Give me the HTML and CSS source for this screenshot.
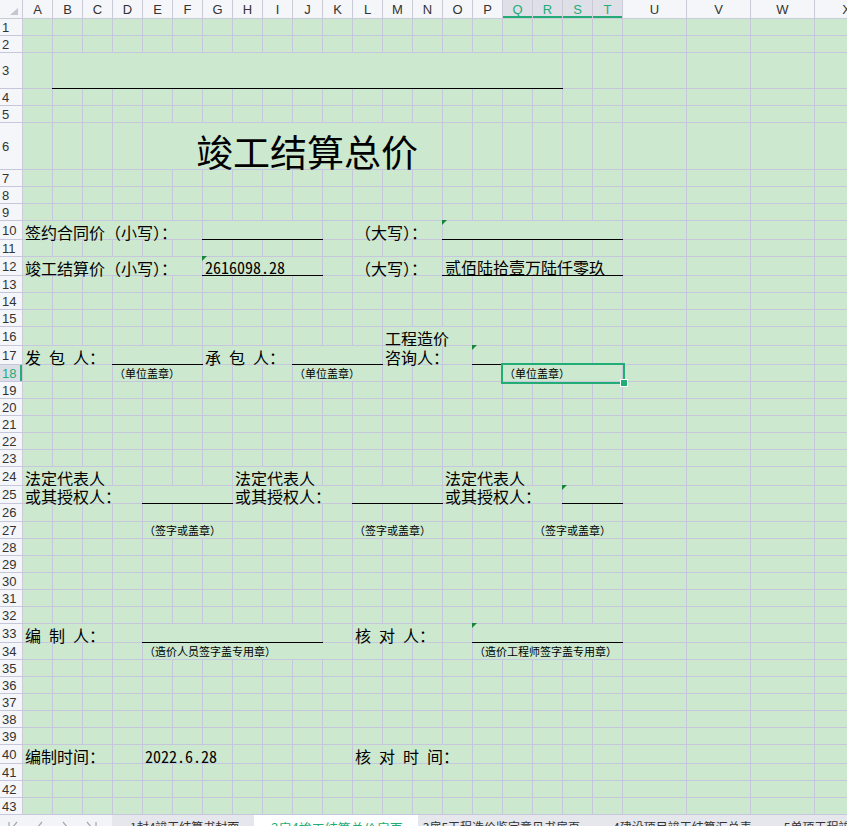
FILE: index.html
```html
<!DOCTYPE html>
<html lang="zh-CN">
<head>
<meta charset="utf-8">
<title>竣工结算总价</title>
<link rel="stylesheet" href="styles.css">
</head>
<body>
<div class="sheet">
  <div class="colhdr">
    <div class="corner"></div>
    <div class="ch">A</div><div class="ch">B</div><div class="ch">C</div><div class="ch">D</div><div class="ch">E</div>
    <div class="ch">F</div><div class="ch">G</div><div class="ch">H</div><div class="ch">I</div><div class="ch">J</div>
    <div class="ch">K</div><div class="ch">L</div><div class="ch">M</div><div class="ch">N</div><div class="ch">O</div>
    <div class="ch">P</div><div class="ch sel">Q</div><div class="ch sel">R</div><div class="ch sel">S</div><div class="ch sel">T</div>
    <div class="ch">U</div><div class="ch">V</div><div class="ch">W</div><div class="ch">X</div>
  </div>

  <div class="row"><div class="rh">1</div></div>
  <div class="row"><div class="rh">2</div></div>
  <div class="row h36"><div class="rh">3</div><div class="c u b-r"></div></div>
  <div class="row"><div class="rh">4</div></div>
  <div class="row"><div class="rh">5</div></div>
  <div class="row h47"><div class="rh">6</div><div class="c cv title e-n">竣工结算总价</div></div>
  <div class="row"><div class="rh">7</div></div>
  <div class="row"><div class="rh">8</div></div>
  <div class="row"><div class="rh">9</div></div>
  <div class="row h19"><div class="rh">10</div>
    <div class="c cv a-f">签约合同价（小写）：</div>
    <div class="c u g-j"></div>
    <div class="c cv l-n">（大写）：</div>
    <div class="c u tri o-t"></div>
  </div>
  <div class="row"><div class="rh">11</div></div>
  <div class="row h19"><div class="rh">12</div>
    <div class="c cv a-f">竣工结算价（小写）：</div>
    <div class="c u tri num g-j">2616098.28</div>
    <div class="c cv l-n">（大写）：</div>
    <div class="c u o-t">贰佰陆拾壹万陆仟零玖</div>
  </div>
  <div class="row"><div class="rh">13</div></div>
  <div class="row"><div class="rh">14</div></div>
  <div class="row"><div class="rh">15</div></div>
  <div class="row h19"><div class="rh">16</div><div class="c cv m-o">工程造价</div></div>
  <div class="row h19"><div class="rh">17</div>
    <div class="c cv sp a-c">发 包 人：</div>
    <div class="c u d-f"></div>
    <div class="c cv sp g-i">承 包 人：</div>
    <div class="c u j-l"></div>
    <div class="c cv m-n">咨询人：</div>
    <div class="c u tri p"></div>
  </div>
  <div class="row"><div class="rh sel">18</div>
    <div class="c s cv d-f">（单位盖章）</div>
    <div class="c s cv j-l">（单位盖章）</div>
    <div class="c s cv q-t active">（单位盖章）</div>
  </div>
  <div class="row"><div class="rh">19</div></div>
  <div class="row"><div class="rh">20</div></div>
  <div class="row"><div class="rh">21</div></div>
  <div class="row"><div class="rh">22</div></div>
  <div class="row"><div class="rh">23</div></div>
  <div class="row h19"><div class="rh">24</div>
    <div class="c cv a-c">法定代表人</div>
    <div class="c cv h-j">法定代表人</div>
    <div class="c cv o-q">法定代表人</div>
  </div>
  <div class="row h18"><div class="rh">25</div>
    <div class="c cv a-d">或其授权人：</div>
    <div class="c u e-g"></div>
    <div class="c cv h-k">或其授权人：</div>
    <div class="c u l-n"></div>
    <div class="c cv o-r">或其授权人：</div>
    <div class="c u tri s-t"></div>
  </div>
  <div class="row h18"><div class="rh">26</div></div>
  <div class="row"><div class="rh">27</div>
    <div class="c s cv e-g">（签字或盖章）</div>
    <div class="c s cv l-n">（签字或盖章）</div>
    <div class="c s cv r-t">（签字或盖章）</div>
  </div>
  <div class="row"><div class="rh">28</div></div>
  <div class="row"><div class="rh">29</div></div>
  <div class="row"><div class="rh">30</div></div>
  <div class="row"><div class="rh">31</div></div>
  <div class="row"><div class="rh">32</div></div>
  <div class="row h19"><div class="rh">33</div>
    <div class="c cv sp a-c">编 制 人：</div>
    <div class="c u e-j"></div>
    <div class="c cv sp l-n">核 对 人：</div>
    <div class="c u tri p-t"></div>
  </div>
  <div class="row"><div class="rh">34</div>
    <div class="c s cv e-k">（造价人员签字盖专用章）</div>
    <div class="c s cv p-t">（造价工程师签字盖专用章）</div>
  </div>
  <div class="row"><div class="rh">35</div></div>
  <div class="row"><div class="rh">36</div></div>
  <div class="row"><div class="rh">37</div></div>
  <div class="row"><div class="rh">38</div></div>
  <div class="row"><div class="rh">39</div></div>
  <div class="row h19"><div class="rh">40</div>
    <div class="c cv a-c">编制时间：</div>
    <div class="c cv num e-g">2022.6.28</div>
    <div class="c cv sp l-o">核 对 时 间：</div>
  </div>
  <div class="row"><div class="rh">41</div></div>
  <div class="row"><div class="rh">42</div></div>
  <div class="row"><div class="rh">43</div></div>

  <div class="tabs">
    <div class="nav">
      <svg class="navicons" width="112" height="14" viewBox="0 0 112 14">
        <g fill="none" stroke="#a4a7b3" stroke-width="1.2">
          <path d="M9 1V13"/>
          <path d="M17 1L12 7L17 13"/>
          <path d="M42 1L37 7L42 13"/>
          <path d="M63 1L68 7L63 13"/>
          <path d="M87 1L92 7L87 13"/>
          <path d="M96 1V13"/>
        </g>
      </svg>
    </div>
    <div class="tab t1">1封4竣工结算书封面</div>
    <div class="tab on">2扉4竣工结算总价扉页</div>
    <div class="tab t3">3扉5工程造价鉴定意见书扉页</div>
    <div class="tab">4建设项目竣工结算汇总表</div>
    <div class="tab">5单项工程竣工结算汇总表</div>
  </div>
</div>
</body>
</html>
```

FILE: styles.css
```css
:root {
  --bg: #cce8cf;
  --grid: #c6c6dd;
  --hdr: #f5f6f9;
  --hdrline: #cacbd7;
  --green: #22ad76;
  --cols: 23px repeat(20, 30px) repeat(4, 64px);
}

* { box-sizing: border-box; }

body {
  margin: 0;
  width: 847px;
  height: 826px;
  overflow: hidden;
  background: var(--bg);
  font-family: "Noto Sans CJK SC", "Noto Sans", sans-serif;
}

.sheet { width: 879px; }

/* column header */
.colhdr {
  display: grid;
  grid-template-columns: var(--cols);
  height: 19px;
  background: var(--hdr);
  border-bottom: 1px solid var(--hdrline);
}
.corner {
  position: relative;
  border-right: 1px solid var(--hdrline);
}
.corner::after {
  content: "";
  position: absolute;
  right: 4px;
  bottom: 3px;
  border-left: 8px solid transparent;
  border-bottom: 7px solid #c4c6d0;
}
.ch {
  display: flex;
  align-items: center;
  justify-content: center;
  border-right: 1px solid var(--hdrline);
  font: 13px/1 "Liberation Sans", Arial, sans-serif;
  color: #333;
}
.ch.sel {
  background: #dfe0e7;
  color: var(--green);
  box-shadow: inset 0 -2px 0 var(--green);
}

/* rows */
.row {
  display: grid;
  grid-template-columns: var(--cols);
  height: 17px;
  background:
    linear-gradient(var(--grid), var(--grid)) left bottom / 100% 1px no-repeat,
    repeating-linear-gradient(90deg, transparent 0 29px, var(--grid) 29px 30px) 23px 0 / 600px 100% no-repeat,
    repeating-linear-gradient(90deg, transparent 0 63px, var(--grid) 63px 64px) 623px 0 / 256px 100% no-repeat,
    var(--bg);
}
.row.h18 { height: 18px; }
.row.h19 { height: 19px; }
.row.h36 { height: 36px; }
.row.h47 { height: 47px; }

.rh {
  grid-column: 1;
  margin-bottom: 1px;
  display: flex;
  align-items: center;
  padding-left: 2px;
  background: var(--hdr);
  border-right: 1px solid var(--hdrline);
  font: 13px/1 "Liberation Sans", Arial, sans-serif;
  color: #333;
}
.rh.sel {
  background: #dcdee5;
  color: var(--green);
  box-shadow: inset -2px 0 0 var(--green);
}

/* cells */
.c {
  position: relative;
  grid-row: 1;
  display: flex;
  align-items: flex-end;
  padding-left: 2px;
  white-space: nowrap;
  font-size: 16px;
  line-height: 16px;
  color: #000;
}
.num { font-feature-settings: "hwid" 1; }
.sp { word-spacing: 4.4px; }
.cv {
  background: linear-gradient(var(--bg), var(--bg)) 0 0 / calc(100% - 1px) calc(100% - 1px) no-repeat;
}
.u {
  margin-left: -1px;
  padding-left: 3px;
  border-bottom: 1px solid #000;
  background: linear-gradient(var(--bg), var(--bg)) 1px 0 / calc(100% - 2px) 100% no-repeat;
}
.tri::before {
  content: "";
  position: absolute;
  top: -1px;
  left: 0;
  border-top: 5px solid #16843a;
  border-right: 5px solid transparent;
}
.s {
  align-items: center;
  font-size: 11px;
  line-height: 11px;
  padding-left: 1px;
  padding-bottom: 1px;
}
.title {
  font-size: 37px;
  line-height: 37px;
  padding-left: 53px;
}
.active::before {
  content: "";
  position: absolute;
  inset: -2px;
  border: 2px solid var(--green);
}
.active::after {
  content: "";
  position: absolute;
  right: -5px;
  bottom: -5px;
  width: 6px;
  height: 6px;
  background: var(--green);
  border: 1px solid #fff;
}

/* column ranges (A = track 2) */
.a-c { grid-column: 2 / 5; }
.a-d { grid-column: 2 / 6; }
.a-f { grid-column: 2 / 8; }
.b-r { grid-column: 3 / 20; }
.d-f { grid-column: 5 / 8; }
.e-g { grid-column: 6 / 9; }
.e-j { grid-column: 6 / 12; }
.e-k { grid-column: 6 / 13; }
.e-n { grid-column: 6 / 16; }
.g-i { grid-column: 8 / 11; }
.g-j { grid-column: 8 / 12; }
.h-j { grid-column: 9 / 12; }
.h-k { grid-column: 9 / 13; }
.j-l { grid-column: 11 / 14; }
.l-n { grid-column: 13 / 16; }
.l-o { grid-column: 13 / 17; }
.m-n { grid-column: 14 / 16; }
.m-o { grid-column: 14 / 17; }
.o-q { grid-column: 16 / 19; }
.o-r { grid-column: 16 / 20; }
.o-t { grid-column: 16 / 22; }
.p { grid-column: 17 / 18; }
.p-t { grid-column: 17 / 22; }
.q-t { grid-column: 18 / 22; }
.r-t { grid-column: 19 / 22; }
.s-t { grid-column: 20 / 22; }

/* sheet tabs */
.tabs {
  display: flex;
  height: 32px;
  background: #e6e7ed;
}
.nav {
  width: 112px;
  flex: none;
  background: #f3f4f7;
  padding-top: 6px;
}
.navicons { display: block; }
.tab {
  flex: none;
  padding: 6px 16px 0;
  font-size: 12px;
  line-height: 12px;
  color: #333;
  white-space: nowrap;
}
.tab.t1 { padding-left: 18px; padding-right: 15px; }
.tab.on {
  background: #fff;
  color: var(--green);
  font-size: 13px;
  line-height: 13px;
  padding-left: 17px;
  padding-right: 15px;
}
.tab.t3 { padding-left: 5px; padding-right: 17px; }
```
